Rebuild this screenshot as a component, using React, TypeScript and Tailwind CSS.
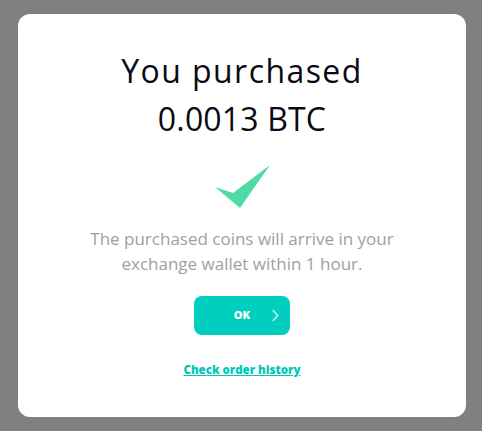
function CheckMark() {
  return (
    <svg viewBox="0 0 56 45" className="h-[45px] w-[56px]">
      <polygon points="1,23 19,29 56,1 26,44" fill="#50dba6" />
    </svg>
  )
}

function Chevron() {
  return (
    <svg viewBox="0 0 8 14" fill="none" stroke="currentColor" strokeWidth="2" strokeLinecap="round" strokeLinejoin="round" className="h-[13px] w-[7px]">
      <path d="M1.5 1.5 6.5 7l-5 5.5" />
    </svg>
  )
}

export default function App() {
  return (
    <div className="min-h-screen bg-[#808080] pl-[18px] pt-[14px]" style={{ fontFamily: '"Open Sans", sans-serif' }}>
      <div className="flex h-[403px] w-[448px] flex-col items-center rounded-[12px] bg-white pt-[33px]">
        <h1 className="flex flex-col items-center text-[32px] leading-[48px] font-normal text-[#0a0a14]">
          <span className="tracking-[0.045em]">You purchased</span>
          <span className="tracking-[0.005em]">0.0013 BTC</span>
        </h1>
        <div className="mt-[21px]">
          <CheckMark />
        </div>
        <p className="mt-[17px] text-center text-[17px] leading-[25px] text-[#a09ea4]">
          The purchased coins will arrive in your
          <br />
          exchange wallet within 1 hour.
        </p>
        <button className="relative mt-[20px] flex h-[39px] w-[96px] items-center justify-center rounded-[8px] bg-[#00cfbf] text-[11px] font-extrabold text-white">
          OK
          <span className="absolute right-[11px] top-[13px] text-white/70">
            <Chevron />
          </span>
        </button>
        <a href="#" className="mt-[27px] text-[11.5px] leading-[16px] font-extrabold text-[#00c7b6] underline">
          Check order history
        </a>
      </div>
    </div>
  )
}
